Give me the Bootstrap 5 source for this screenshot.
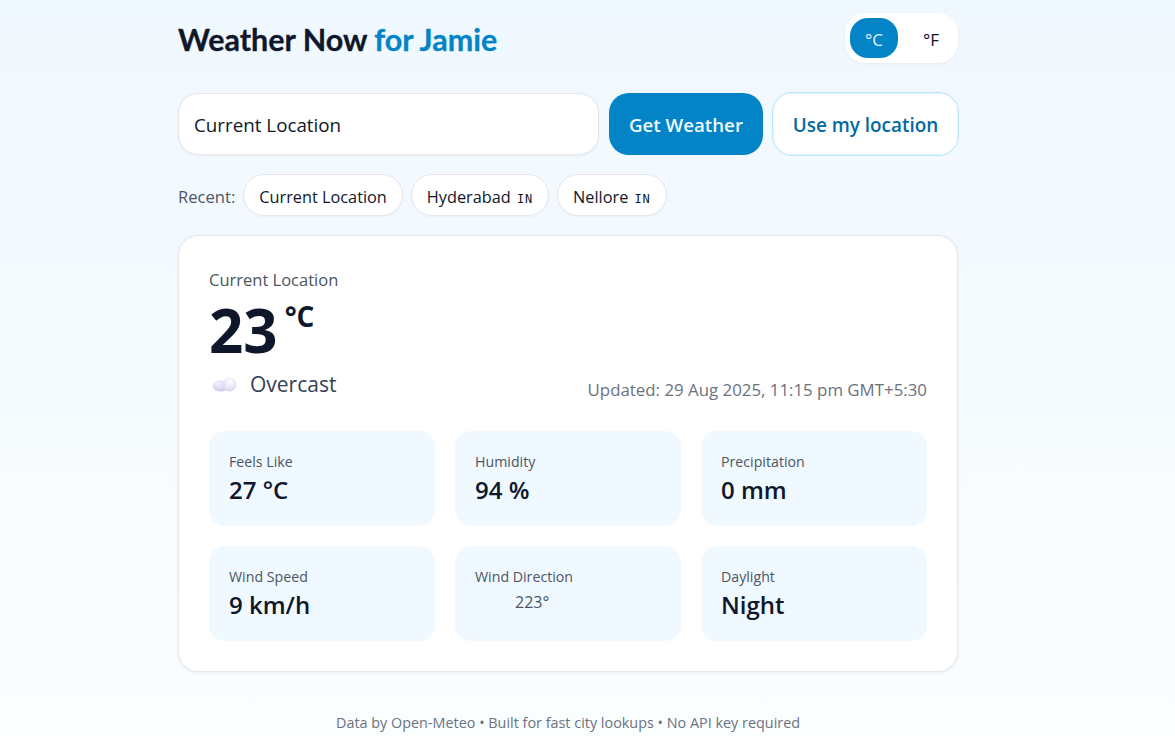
<!doctype html>
<html lang="en">
<head>
<meta charset="utf-8">
<title>Weather Now</title>
<link href="https://cdn.jsdelivr.net/npm/bootstrap@5.3.0/dist/css/bootstrap.min.css" rel="stylesheet">
<style>
html,body{height:100%}
body{font-family:"Open Sans","Noto Sans",sans-serif;background:linear-gradient(180deg,#f0f8ff 0%,#fbfeff 100%);color:#0f172a;overflow:hidden}
.shell{width:781px;margin-left:178px}
.topbar{height:63px;padding-top:13px;margin-bottom:29px}
.brand{font-family:Lato,sans-serif;font-weight:700;font-size:30.5px;line-height:53px;margin:0;color:#0f172a;-webkit-text-stroke:.3px currentColor}
.brand span{color:#0284c7}
.unit-box{width:113px;height:50px;background:#fff;border-radius:20px;padding:5px;box-shadow:0 1px 3px rgba(15,23,42,.05);margin-right:1px}
.unit-btn{flex:0 0 48px;height:40px;border-radius:18px;border:0;background:transparent;font-size:17px;padding:3px 0 0;color:#0f172a;margin-right:9px}
.unit-btn.on{background:#0284c7;color:#e0f2fe}
.loc-input{flex:0 0 421px;width:421px;height:62px;border:1px solid #e5e7eb;border-radius:20px;font-size:18.8px;padding:2px 15px 0;box-shadow:0 1px 3px rgba(15,23,42,.05);color:#0f172a}
.go-btn{flex:0 0 154px;height:62px;margin-left:10px;border-radius:20px;background:#0284c7;color:#f0f9ff;font-weight:600;font-size:18.7px;border:0;padding:2px 0 0}
.geo-btn{flex:0 0 187px;height:64px;margin-left:9px;border-radius:20px;background:#fff;color:#0369a1;font-weight:600;font-size:18.9px;border:1px solid #bae6fd;box-shadow:inset 0 0 0 1px rgba(186,230,253,.35);padding:2px 0 0}
.recent{margin-top:18px;height:42px;gap:8px;font-size:16.6px}
.recent-lbl{color:#4b5563;padding-top:4px}
.chip{height:42px;border:1px solid #e5e7eb;border-radius:21px;background:#fff;padding:4px 15px 0;font-size:16.3px;color:#0f172a;box-shadow:0 1px 2px rgba(15,23,42,.04);white-space:nowrap}
.cc{font-family:"DejaVu Sans Mono",monospace;font-size:12px;letter-spacing:.8px;margin-left:2px}
.panel{margin-top:19px;width:780px;height:437px;background:#fff;border:1px solid #e5e7eb;border-radius:20px;padding:30px;box-shadow:0 1px 4px rgba(15,23,42,.06)}
.place{font-size:16.5px;color:#4b5563;line-height:28px}
.temp{font-size:60px;font-weight:700;line-height:72px;color:#0f172a;height:68px}
.temp sup{font-size:28px;top:-26px;font-weight:700;margin-left:7px;vertical-align:baseline;position:relative}
.cond{font-size:21px;color:#334155;line-height:30px;gap:12px;padding-top:7px}
.stamp{font-size:16.85px;color:#6b7280;padding-top:15px}
.tiles{display:grid;grid-template-columns:repeat(3,226px);gap:20px;margin-top:29px}
.tile{height:95px;background:#f0f9ff;border-radius:16px;padding:20px}
.tile-k{font-size:14.2px;color:#4b5563;line-height:22px}
.tile-v{font-size:24px;font-weight:600;line-height:32px;color:#0f172a;padding-top:1px}
.tile-d{font-size:16px;color:#4b5563;line-height:26px;padding-left:40px;padding-top:1px}
.foot{width:780px;text-align:center;font-size:14.4px;color:#6b7280;margin-top:40px}
</style>
</head>
<body>
<div class="shell">
  <div class="topbar d-flex justify-content-between align-items-start">
    <h1 class="brand">Weather Now <span>for Jamie</span></h1>
    <div class="unit-box d-flex">
      <button class="unit-btn on">°C</button>
      <button class="unit-btn">°F</button>
    </div>
  </div>
  <div class="d-flex align-items-center">
    <input class="loc-input form-control" value="Current Location">
    <button class="btn go-btn">Get Weather</button>
    <button class="btn geo-btn">Use my location</button>
  </div>
  <div class="recent d-flex align-items-center">
    <span class="recent-lbl">Recent:</span>
    <button class="chip">Current Location</button>
    <button class="chip">Hyderabad <span class="cc">IN</span></button>
    <button class="chip">Nellore <span class="cc">IN</span></button>
  </div>
  <div class="panel">
    <div class="place">Current Location</div>
    <div class="temp">23<sup>°C</sup></div>
    <div class="d-flex justify-content-between align-items-start">
      <div class="cond d-flex align-items-center">
        <svg width="29" height="20" viewBox="0 0 29 20" aria-hidden="true">
          <defs>
            <radialGradient id="c1" cx=".55" cy=".3" r=".8"><stop offset="0" stop-color="#ffffff"/><stop offset="1" stop-color="#d4cfee"/></radialGradient>
            <radialGradient id="c2" cx=".35" cy=".3" r=".8"><stop offset="0" stop-color="#f4f3fb"/><stop offset="1" stop-color="#c9c4ea"/></radialGradient>
          </defs>
          <ellipse cx="11.5" cy="12" rx="8" ry="5.5" fill="url(#c2)"/>
          <circle cx="20.5" cy="10.5" r="7" fill="url(#c1)"/>
        </svg>
        <span>Overcast</span>
      </div>
      <div class="stamp">Updated: 29 Aug 2025, 11:15 pm GMT+5:30</div>
    </div>
    <div class="tiles">
      <div class="tile"><div class="tile-k">Feels Like</div><div class="tile-v">27 °C</div></div>
      <div class="tile"><div class="tile-k">Humidity</div><div class="tile-v">94 %</div></div>
      <div class="tile"><div class="tile-k">Precipitation</div><div class="tile-v">0 mm</div></div>
      <div class="tile"><div class="tile-k">Wind Speed</div><div class="tile-v">9 km/h</div></div>
      <div class="tile"><div class="tile-k">Wind Direction</div><div class="tile-d">223°</div></div>
      <div class="tile"><div class="tile-k">Daylight</div><div class="tile-v">Night</div></div>
    </div>
  </div>
  <div class="foot">Data by Open-Meteo • Built for fast city lookups • No API key required</div>
</div>
</body>
</html>
